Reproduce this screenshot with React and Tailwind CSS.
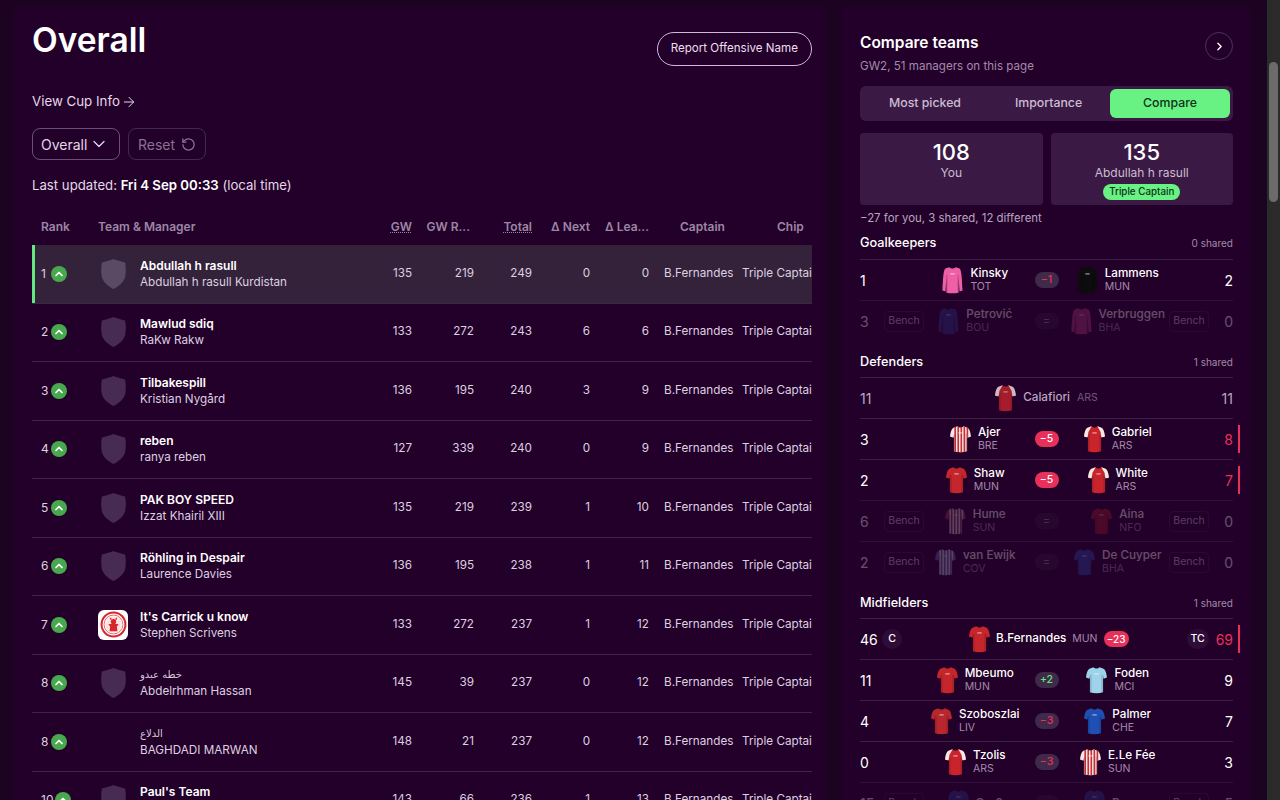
import { ArrowRight, ChevronDown, ChevronRight, ChevronUp, RotateCcw } from "lucide-react";
import { useId } from "react";

const FONT = "font-['Inter','Noto_Sans','DejaVu_Sans',sans-serif]";
const TABLE_COLS = "grid grid-cols-[66px_278px_36px_62px_58px_58px_59px_93px_150px]";
const COMPARE_COLS = "grid grid-cols-[24px_32px_1fr_24px_1fr_32px_24px] items-center";

const managers = [
  { rank: 1, team: "Abdullah h rasull", name: "Abdullah h rasull Kurdistan", gw: 135, gwr: 219, total: 249, next: 0, lead: 0, active: true },
  { rank: 2, team: "Mawlud sdiq", name: "RaKw Rakw", gw: 133, gwr: 272, total: 243, next: 6, lead: 6 },
  { rank: 3, team: "Tilbakespill", name: "Kristian Nygård", gw: 136, gwr: 195, total: 240, next: 3, lead: 9 },
  { rank: 4, team: "reben", name: "ranya reben", gw: 127, gwr: 339, total: 240, next: 0, lead: 9 },
  { rank: 5, team: "PAK BOY SPEED", name: "Izzat Khairil XIII", gw: 135, gwr: 219, total: 239, next: 1, lead: 10 },
  { rank: 6, team: "Röhling in Despair", name: "Laurence Davies", gw: 136, gwr: 195, total: 238, next: 1, lead: 11 },
  { rank: 7, team: "It's Carrick u know", name: "Stephen Scrivens", gw: 133, gwr: 272, total: 237, next: 1, lead: 12, crest: true },
  { rank: 8, team: "خطه عبدو", name: "Abdelrhman Hassan", gw: 145, gwr: 39, total: 237, next: 0, lead: 12, arabic: true },
  { rank: 8, team: "الدلاع", name: "BAGHDADI MARWAN", gw: 148, gwr: 21, total: 237, next: 0, lead: 12, arabic: true, noShield: true },
  { rank: 10, team: "Paul's Team", name: "", gw: 143, gwr: 66, total: 236, next: 1, lead: 13 },
];

function Shirt({ base, sleeve, stripe, long }) {
  const id = useId();
  const body = long
    ? "M8.5 1.5 C10 3 14 3 15.5 1.5 L19.5 2.5 C22 4 22.5 8 23.5 28 L20 29 L19 13 L19 30.5 C15 31.5 9 31.5 5 30.5 L5 13 L4 29 L0.5 28 C1.5 8 2 4 4.5 2.5 Z"
    : "M8.5 1.5 C10 3 14 3 15.5 1.5 L20 3 C22 4 23.5 8 24 13 L20 14.5 L19.5 11 L19.5 30 C15 31.5 9 31.5 4.5 30 L4.5 11 L4 14.5 L0 13 C0.5 8 2 4 4 3 Z";
  return (
    <svg viewBox="0 0 24 32" className="w-[21px] h-[28px] shrink-0">
      <defs>
        <clipPath id={id}>
          <path d={body} />
        </clipPath>
      </defs>
      <path d={body} fill={base} />
      <g clipPath={`url(#${id})`}>
        {stripe && [5, 8.5, 12, 15.5, 19].map((x) => <rect key={x} x={x} y="0" width="1.8" height="32" fill={stripe} />)}
        {sleeve && (
          <>
            <path d="M0 14 L4.5 14 L5 8 L9 1 L3 1 L0 7 Z" fill={sleeve} />
            <path d="M24 14 L19.5 14 L19 8 L15 1 L21 1 L24 7 Z" fill={sleeve} />
          </>
        )}
        <rect x="4.5" y="10" width="2" height="22" fill="#00000022" />
        <rect x="17.5" y="10" width="2" height="22" fill="#00000022" />
      </g>
      <rect x="9.5" y="8" width="5" height="2" fill="#ffffff66" />
      <path d="M9 1.8 Q12 4.2 15 1.8" fill="none" stroke="#00000055" strokeWidth="1" />
    </svg>
  );
}

function Shield({ fill }) {
  return (
    <svg viewBox="0 0 28 31" className="w-[27px] h-[30px]">
      <path d="M14 0 C17 1.5 22 2.5 26 3.5 C27 8 27 14 26 19 C24 25 18 29 14 31 C10 29 4 25 2 19 C1 14 1 8 2 3.5 C6 2.5 11 1.5 14 0 Z" fill={fill} />
    </svg>
  );
}

function Crest() {
  return (
    <div className="w-[30px] h-[30px] rounded-md bg-white flex items-center justify-center">
      <svg viewBox="0 0 24 24" className="w-[27px] h-[27px]">
        <circle cx="12" cy="12" r="10.6" fill="none" stroke="#d8262c" strokeWidth="1.8" />
        <circle cx="12" cy="12" r="8.4" fill="none" stroke="#d8262c" strokeWidth="0.6" />
        <circle cx="12" cy="12" r="7.4" fill="#fbe4e2" />
        <circle cx="12" cy="9.5" r="2.4" fill="#d8262c" />
        <path d="M9.3 8 L8.6 5.6 L10.8 7.2 Z M14.7 8 L15.4 5.6 L13.2 7.2 Z" fill="#d8262c" />
        <path d="M7.5 11.5 L16.5 11.5 L15 14 L15.5 18 L8.5 18 L9 14 Z" fill="#d8262c" />
      </svg>
    </div>
  );
}

function TableRow({ m }) {
  return (
    <div className={`${TABLE_COLS} h-[58.5px] items-center border-b border-[#3f2349] text-[11.7px] text-[#ddd0e0] relative ${m.active ? "bg-[#33223a]" : ""}`}>
      {m.active && <span className="absolute left-0 top-0 bottom-0 w-[3px] bg-[#63e77e]" />}
      <div className="flex items-center gap-[2px] pl-[9px] text-[12px]">
        <span className="min-w-[8px]">{m.rank}</span>
        <span className="w-[16px] h-[16px] rounded-full bg-[#47a84e] flex items-center justify-center">
          <ChevronUp size={12} strokeWidth={3.5} className="text-white" />
        </span>
      </div>
      <div className="flex items-center gap-[12px]">
        <div className="w-[30px] flex justify-center">
          {m.crest ? <Crest /> : m.noShield ? null : <Shield fill={m.active ? "#5a4a63" : "#472b53"} />}
        </div>
        <div className="leading-[17px]">
          <div className={m.arabic ? "font-['DejaVu_Sans',sans-serif] text-[10px] text-[#d9c9dc]" : "text-[12px] font-semibold text-white"}>{m.team}</div>
          <div className="min-h-[17px]">{m.name}</div>
        </div>
      </div>
      <div className="text-right">{m.gw}</div>
      <div className="text-right">{m.gwr}</div>
      <div className="text-right">{m.total}</div>
      <div className="text-right">{m.next}</div>
      <div className="text-right">{m.lead}</div>
      <div className="pl-[15px] whitespace-nowrap">B.Fernandes</div>
      <div className="whitespace-nowrap">Triple Captain</div>
    </div>
  );
}

function Player({ name, team, shirt }) {
  return (
    <div className="flex items-center justify-center gap-[7px]">
      <Shirt {...shirt} />
      <div className="leading-[14px]">
        <div className="text-[11.7px] font-medium text-white">{name}</div>
        <div className="text-[10.5px] text-[#a28aab]">{team}</div>
      </div>
    </div>
  );
}

function DiffBadge({ value, tone }) {
  const tones = {
    hot: "bg-[#e9305a] text-white",
    dimRed: "bg-[#3f2a4a] text-[#e9305a]",
    dimGreen: "bg-[#3f2a4a] text-[#63e77e]",
    none: "bg-[#36193f] text-[#a28aab]",
  };
  return (
    <span className={`w-[24px] h-[16px] rounded-full flex items-center justify-center text-[10.5px] font-medium ${tones[tone]}`}>{value}</span>
  );
}

function RedBar() {
  return <span className="absolute -right-[7px] top-[6px] bottom-[6px] w-[2px] bg-[#e9305a]" />;
}

function BenchTag() {
  return <span className="w-[40px] shrink-0 h-[21px] rounded border border-[#ffffff1c] text-[10.5px] flex items-center justify-center text-[#d5c5da]">Bench</span>;
}

function CompareRow({ a, b, left, right, bench, tone, hot }) {
  const dim = bench ? "opacity-30" : "";
  return (
    <div className={`${COMPARE_COLS} h-[41px] border-t ${bench ? "border-[#300f39]" : "border-[#3a2044]"} relative text-[14px] ${bench ? "" : "text-white"}`}>
      <span className={dim}>{left}</span>
      <span className={`flex ${dim}`}>{bench && <BenchTag />}</span>
      <div className={dim}><Player {...a} /></div>
      <div className={dim}><DiffBadge value={tone === "none" ? "=" : hot || tone.value} tone={tone === "none" ? "none" : tone.kind} /></div>
      <div className={dim}><Player {...b} /></div>
      <span className={`flex justify-end ${dim}`}>{bench && <BenchTag />}</span>
      <span className={`text-right ${dim} ${hot ? "text-[#e9305a]" : ""}`}>{right}</span>
      {hot && <RedBar />}
    </div>
  );
}

function SectionHead({ title, shared, first }) {
  return (
    <div className={`flex items-center justify-between ${first ? "h-[33px] pt-[1px]" : "h-[36px] pt-[6px]"}`}>
      <span className="text-[12.7px] font-medium text-white">{title}</span>
      <span className="text-[10px] text-[#a28aab]">{shared}</span>
    </div>
  );
}

const ars = { base: "#c9242c", sleeve: "#f2e9e9" };
const mun = { base: "#c4262b" };
const redWhite = { base: "#f1e7e7", stripe: "#cf2a30" };

export default function App() {
  return (
    <div className={`${FONT} h-screen overflow-hidden flex bg-[#1c0322] text-white`}>
      <main className="w-[812px] ml-[14px] mt-[6px] shrink-0 bg-[#230029] pl-[18px] pr-[14px] overflow-hidden">
        <div className="flex items-start justify-between pt-[12px]">
          <h1 className="text-[33.5px] leading-[44px] font-semibold">Overall</h1>
          <button className="mt-[14px] h-[34px] px-[13px] rounded-full border border-[#cfb9d6] text-[11.6px] text-[#ecdff0]">Report Offensive Name</button>
        </div>
        <div className="mt-[26px] h-[20px] flex items-center gap-[1px] text-[13.3px] text-[#e4d8e8]">
          View Cup Info <ArrowRight size={16} strokeWidth={1.5} />
        </div>
        <div className="mt-[16px] flex gap-[8px]">
          <button className="h-[32px] w-[88px] pl-[8px] rounded-lg border border-[#6a4f75] flex items-center gap-[2px] text-[14px] text-[#e4d8e8]">
            Overall <ChevronDown size={20} strokeWidth={1.5} />
          </button>
          <button className="h-[32px] w-[78px] rounded-lg border border-[#43294d] flex items-center justify-center gap-[6px] text-[14px] text-[#8a7193]">
            Reset <RotateCcw size={15} />
          </button>
        </div>
        <p className="mt-[15px] h-[20px] leading-[20px] text-[13.2px] text-[#e4d8e8]">
          Last updated: <span className="font-semibold text-white">Fri 4 Sep 00:33</span> (local time)
        </p>
        <div className={`${TABLE_COLS} mt-[15px] mb-[1px] h-[34px] items-center text-[12px] font-semibold text-[#9c86a5]`}>
          <div className="pl-[9px]">Rank</div>
          <div>Team &amp; Manager</div>
          <div className="text-right underline decoration-dotted">GW</div>
          <div className="text-right pr-[4px]">GW R...</div>
          <div className="text-right underline decoration-dotted">Total</div>
          <div className="text-right">Δ Next</div>
          <div className="text-right">Δ Lea...</div>
          <div className="pl-[31px]">Captain</div>
          <div className="pl-[35px]">Chip</div>
        </div>
        <div className="overflow-hidden">
          {managers.map((m) => <TableRow key={m.rank + m.team} m={m} />)}
        </div>
      </main>

      <aside className="w-[408px] ml-[16px] mt-[6px] shrink-0 bg-[#230029] pl-[18px] pr-[17px] overflow-hidden">
        <div className="flex items-start justify-between pt-[27px]">
          <div>
            <h2 className="text-[15.5px] leading-[20px] font-semibold">Compare teams</h2>
            <p className="mt-[4px] text-[11.6px] leading-[18px] text-[#a28aab]">GW2, 51 managers on this page</p>
          </div>
          <button className="w-[28px] h-[28px] mt-[-1px] rounded-full border border-[#4d3258] flex items-center justify-center">
            <ChevronRight size={13} strokeWidth={2.5} />
          </button>
        </div>
        <div className="mt-[11px] h-[35px] rounded-md bg-[#3a1a44] p-[3px] grid grid-cols-[124px_123px_120px] text-[12.3px] font-medium text-[#cdbcd3]">
          <span className="flex items-center justify-center">Most picked</span>
          <span className="flex items-center justify-center">Importance</span>
          <span className="flex items-center justify-center rounded-md bg-[#67f283] text-[#12301a]">Compare</span>
        </div>
        <div className="mt-[12px] grid grid-cols-2 gap-[8px]">
          <div className="h-[72px] rounded bg-[#3a1a44] flex flex-col items-center pt-[6px]">
            <span className="text-[22px] leading-[26px] font-medium">108</span>
            <span className="text-[12px] leading-[16px] text-[#cdbcd3]">You</span>
          </div>
          <div className="h-[72px] rounded bg-[#3a1a44] flex flex-col items-center pt-[6px]">
            <span className="text-[22px] leading-[26px] font-medium">135</span>
            <span className="text-[12px] leading-[16px] text-[#cdbcd3]">Abdullah h rasull</span>
            <span className="mt-[3px] h-[16px] px-[6px] rounded-full bg-[#67f283] text-[#12301a] text-[9.8px] font-medium flex items-center">Triple Captain</span>
          </div>
        </div>
        <p className="mt-[5px] text-[11.4px] leading-[16px] text-[#b9a6c0]">−27 for you, 3 shared, 12 different</p>

        <SectionHead first title="Goalkeepers" shared="0 shared" />
        <CompareRow left="1" right="2" tone={{ value: "−1", kind: "dimRed" }}
          a={{ name: "Kinsky", team: "TOT", shirt: { base: "#ef5fa7", long: true } }}
          b={{ name: "Lammens", team: "MUN", shirt: { base: "#0c0c0c", long: true } }} />
        <CompareRow bench left="3" right="0" tone="none"
          a={{ name: "Petrović", team: "BOU", shirt: { base: "#2a3d8f", long: true } }}
          b={{ name: "Verbruggen", team: "BHA", shirt: { base: "#b43c80", long: true } }} />

        <SectionHead title="Defenders" shared="1 shared" />
        <div className="h-[41px] border-t border-[#3a2044] flex items-center justify-between text-[14px] text-[#b9a6c0]">
          <span>11</span>
          <div className="flex items-center gap-[7px]">
            <span className="opacity-80"><Shirt {...ars} /></span>
            <span className="text-[11.7px] font-medium">Calafiori</span>
            <span className="text-[10.5px] text-[#6f5878]">ARS</span>
          </div>
          <span>11</span>
        </div>
        <CompareRow left="3" right="8" hot="−5" tone={{ kind: "hot" }}
          a={{ name: "Ajer", team: "BRE", shirt: redWhite }}
          b={{ name: "Gabriel", team: "ARS", shirt: ars }} />
        <CompareRow left="2" right="7" hot="−5" tone={{ kind: "hot" }}
          a={{ name: "Shaw", team: "MUN", shirt: mun }}
          b={{ name: "White", team: "ARS", shirt: ars }} />
        <CompareRow bench left="6" right="0" tone="none"
          a={{ name: "Hume", team: "SUN", shirt: { base: "#8a3a50", stripe: "#ddd" } }}
          b={{ name: "Aina", team: "NFO", shirt: { base: "#a3202c" } }} />
        <CompareRow bench left="2" right="0" tone="none"
          a={{ name: "van Ewijk", team: "COV", shirt: { base: "#5a6aa8", stripe: "#ddd" } }}
          b={{ name: "De Cuyper", team: "BHA", shirt: { base: "#2a4fb0" } }} />

        <SectionHead title="Midfielders" shared="1 shared" />
        <div className="h-[41px] border-t border-[#3a2044] flex items-center relative text-[14px]">
          <span className="w-[24px]">46</span>
          <span className="ml-[-2px] w-[20px] h-[20px] rounded-full bg-[#2e0c37] flex items-center justify-center text-[10.5px] font-medium">C</span>
          <div className="ml-[67px] flex items-center gap-[6px]">
            <Shirt {...mun} />
            <span className="text-[11.7px] font-medium">B.Fernandes</span>
            <span className="text-[10.5px] text-[#a28aab]">MUN</span>
            <span className="h-[16px] w-[25px] rounded-full bg-[#e9305a] flex items-center justify-center text-[10px] font-medium">−23</span>
          </div>
          <span className="ml-auto w-[22px] h-[20px] rounded-full bg-[#2e0c37] flex items-center justify-center text-[10.5px] font-medium">TC</span>
          <span className="ml-[7px] text-[#e9305a]">69</span>
          <RedBar />
        </div>
        <CompareRow left="11" right="9" tone={{ value: "+2", kind: "dimGreen" }}
          a={{ name: "Mbeumo", team: "MUN", shirt: mun }}
          b={{ name: "Foden", team: "MCI", shirt: { base: "#9fd3ea" } }} />
        <CompareRow left="4" right="7" tone={{ value: "−3", kind: "dimRed" }}
          a={{ name: "Szoboszlai", team: "LIV", shirt: { base: "#b8262e" } }}
          b={{ name: "Palmer", team: "CHE", shirt: { base: "#1f4fb3" } }} />
        <CompareRow left="0" right="3" tone={{ value: "−3", kind: "dimRed" }}
          a={{ name: "Tzolis", team: "ARS", shirt: ars }}
          b={{ name: "E.Le Fée", team: "SUN", shirt: redWhite }} />
        <CompareRow bench left="15" right="5" tone="none"
          a={{ name: "Groß", team: "", shirt: { base: "#2a3d8f" } }}
          b={{ name: "Rogers", team: "", shirt: { base: "#2a3d8f" } }} />
      </aside>

      <div className="ml-auto w-[13px] h-full bg-[#2b2b2b] pt-[62px] px-[2px] shrink-0">
        <div className="h-[140px] rounded-full bg-[#6b6b6b]" />
      </div>
    </div>
  );
}
